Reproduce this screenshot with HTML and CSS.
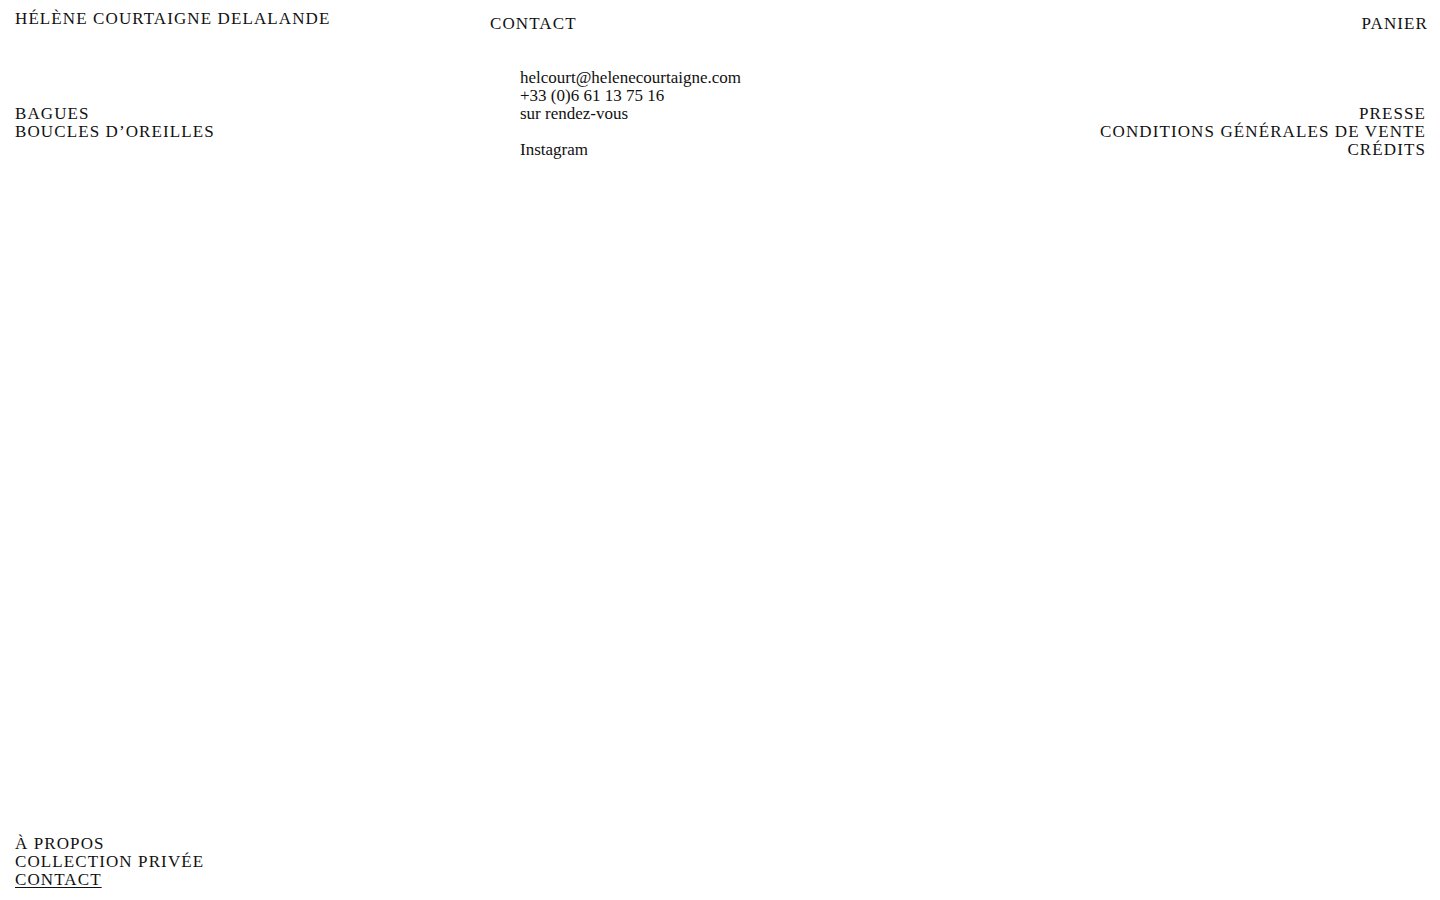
FILE: index.html
```html
<!DOCTYPE html>
<html lang="fr">
<head>
<meta charset="utf-8">
<title>Contact — Hélène Courtaigne Delalande</title>
<link rel="stylesheet" href="styles.css">
</head>
<body>
<div class="page">
  <header class="top">
    <a class="brand caps" href="#">Hélène Courtaigne Delalande</a>
    <a class="section caps" href="#">Contact</a>
    <a class="cart caps" href="#">Panier</a>
  </header>
  <main class="panel">
    <nav class="menu menu-left caps">
      <a href="#">Bagues</a>
      <a href="#">Boucles d’oreilles</a>
    </nav>
    <div class="info">
      <a href="#">helcourt@helenecourtaigne.com</a>
      <span>+33 (0)6 61 13 75 16</span>
      <span>sur rendez-vous</span>
      <span class="gap"></span>
      <a href="#">Instagram</a>
    </div>
    <nav class="menu menu-right caps">
      <a href="#">Presse</a>
      <a href="#">Conditions générales de vente</a>
      <a href="#">Crédits</a>
    </nav>
  </main>
  <footer class="bottom caps">
    <a href="#">À propos</a>
    <a href="#">Collection privée</a>
    <a class="current" href="#">Contact</a>
  </footer>
</div>
</body>
</html>
```
FILE: styles.css
```css
html, body {
  margin: 0;
  padding: 0;
  background: #fff;
}
body {
  font-family: "Liberation Serif", "Times New Roman", serif;
  font-size: 17px;
  line-height: 18px;
  color: #111;
}
a {
  color: inherit;
  text-decoration: none;
}
.caps {
  text-transform: uppercase;
  letter-spacing: 0.065em;
}
.page {
  height: 100vh;
  display: flex;
  flex-direction: column;
  box-sizing: border-box;
  padding: 10px 14px 11px 15px;
}
.top {
  display: flex;
  align-items: flex-start;
}
.brand {
  width: 475px;
}
.section {
  margin-top: 5px;
}
.cart {
  margin-left: auto;
  margin-top: 5px;
  margin-right: -2px;
}
.panel {
  display: flex;
  align-items: flex-start;
  margin-top: 36px;
}
.menu {
  display: flex;
  flex-direction: column;
}
.menu-left {
  width: 505px;
  margin-top: 36px;
}
.menu-right {
  margin-left: auto;
  align-items: flex-end;
  margin-top: 36px;
}
.info {
  display: flex;
  flex-direction: column;
}
.gap {
  height: 18px;
}
.bottom {
  margin-top: auto;
  display: flex;
  flex-direction: column;
  align-items: flex-start;
}
.current {
  text-decoration: underline;
  text-underline-offset: 2px;
  text-decoration-thickness: 1px;
}
```
